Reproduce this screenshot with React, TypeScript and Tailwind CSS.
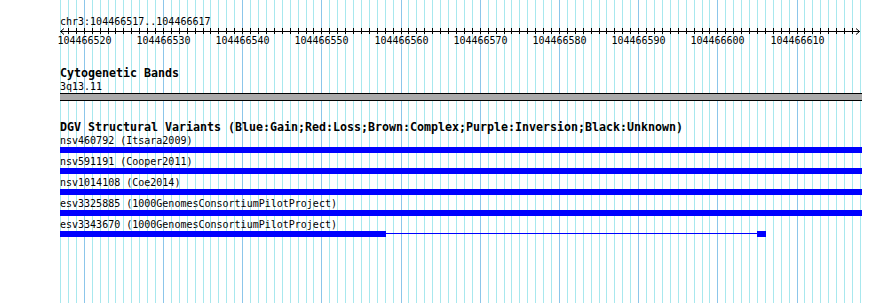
import React from "react";

const STEP = 7.92;
const LEFT = 60;
const N = 102;

function xAt(i: number) {
  return Math.round(LEFT + i * STEP) + 0.5;
}

function Grid() {
  const lines = [];
  for (let i = 0; i < N; i++) {
    const major = (517 + i) % 10 === 0;
    lines.push(
      <line
        key={i}
        x1={xAt(i)}
        x2={xAt(i)}
        y1={0}
        y2={303}
        stroke={major ? "#8cc6ea" : "#a8e8ee"}
        strokeWidth={1}
      />
    );
  }
  return (
    <svg
      className="absolute inset-0 pointer-events-none"
      width={890}
      height={303}
      viewBox="0 0 890 303"
    >
      {lines}
    </svg>
  );
}

function Ruler() {
  const ticks = [];
  const labels = [];
  for (let i = 1; i < N - 1; i++) {
    const pos = 517 + i;
    ticks.push(
      <line key={i} x1={xAt(i)} x2={xAt(i)} y1={0} y2={6} stroke="#000" strokeWidth={1} />
    );
    if (pos % 10 === 0) {
      labels.push(
        <text
          key={"l" + i}
          x={xAt(i)}
          y={16}
          textAnchor="middle"
          fontFamily="'DejaVu Sans Mono', monospace"
          fontSize={10}
          fill="#000"
        >
          {"104466" + String(pos)}
        </text>
      );
    }
  }
  return (
    <svg width={890} height={18} viewBox="0 0 890 18" className="block overflow-visible">
      <line x1={60} x2={860} y1={3.5} y2={3.5} stroke="#000" strokeWidth={1} />
      <polyline points="64,0.5 60.5,3.5 64,6.5" fill="none" stroke="#000" strokeWidth={1} />
      <polyline points="856,0.5 859.5,3.5 856,6.5" fill="none" stroke="#000" strokeWidth={1} />
      {ticks}
      {labels}
    </svg>
  );
}

const rows = [
  "nsv460792 (Itsara2009)",
  "nsv591191 (Cooper2011)",
  "nsv1014108 (Coe2014)",
  "esv3325885 (1000GenomesConsortiumPilotProject)",
];

export default function App() {
  return (
    <div className="relative w-[890px] h-[303px] bg-white overflow-hidden font-['DejaVu_Sans_Mono',monospace] text-black">
      <Grid />
      <div className="relative flex flex-col pt-[15px]">
        <div className="pl-[60px] h-[13px] leading-[13px] text-[10px]">chr3:104466517..104466617</div>
        <Ruler />
        <div className="mt-[21px] pl-[60px] h-[13px] leading-[13px] text-[11.63px] font-bold">Cytogenetic Bands</div>
        <div className="pl-[60px] h-[13px] leading-[13px] text-[10px]">3q13.11</div>
        <div className="ml-[60px] w-[802px] h-[8px] bg-[#aaaaaa] border-y border-black" />
        <div className="mt-[20px] pl-[60px] h-[13px] leading-[13px] text-[11.63px] font-bold whitespace-pre">
          DGV Structural Variants (Blue:Gain;Red:Loss;Brown:Complex;Purple:Inversion;Black:Unknown)
        </div>
        {rows.map((r) => (
          <div key={r} className="flex flex-col mb-[2px]">
            <div className="pl-[60px] h-[13px] leading-[13px] text-[10px] whitespace-pre">{r}</div>
            <div className="ml-[60px] w-[802px] h-[6px] bg-[#0000ff]" />
          </div>
        ))}
        <div className="flex flex-col">
          <div className="pl-[60px] h-[13px] leading-[13px] text-[10px] whitespace-pre">
            esv3343670 (1000GenomesConsortiumPilotProject)
          </div>
          <div className="ml-[60px] w-[802px] h-[6px] flex items-start">
            <div className="w-[326px] h-[6px] bg-[#0000ff]" />
            <div className="w-[371px] h-[1px] mt-[2px] bg-[#0000ff]" />
            <div className="w-[9px] h-[6px] bg-[#0000ff]" />
          </div>
        </div>
      </div>
    </div>
  );
}
